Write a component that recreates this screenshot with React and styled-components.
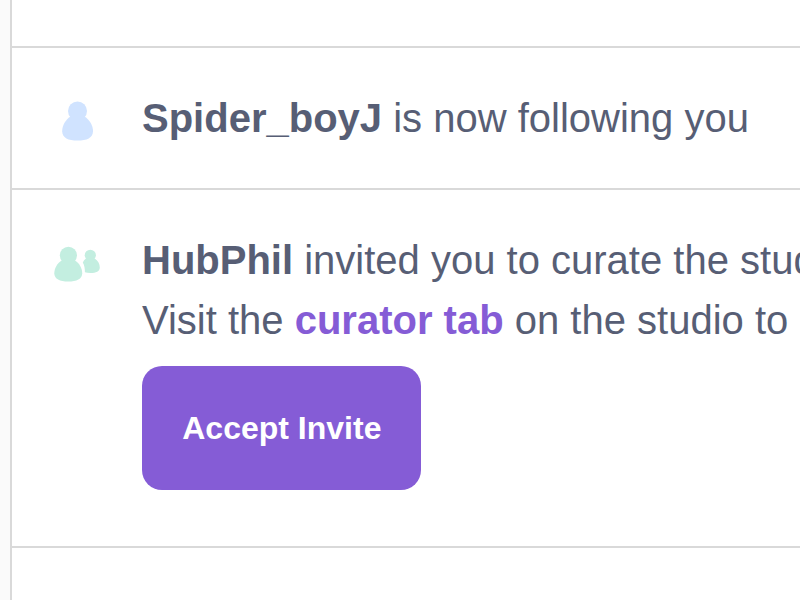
import React from 'react';
import styled, { createGlobalStyle } from 'styled-components';

const GlobalStyle = createGlobalStyle`
  * { box-sizing: border-box; }
  body {
    margin: 0;
    overflow: hidden;
    background: #fafafa;
    font-family: "Liberation Sans", Arial, sans-serif;
  }
`;

const Page = styled.div`
  width: 800px;
  height: 600px;
  padding-left: 10px;
  overflow: hidden;
`;

const List = styled.ul`
  width: 1400px;
  height: 600px;
  margin: 0;
  padding: 0;
  list-style: none;
  background: #fff;
  border-left: 2px solid #d9d9d9;
`;

const Item = styled.li`
  display: flex;
  align-items: flex-start;
  height: ${({ $height }) => $height}px;
  padding: 40px 42px 0;
  border-bottom: 2px solid #d9d9d9;
`;

const IconSlot = styled.div`
  flex: none;
  width: 88px;
  height: 60px;
  svg { display: block; }
`;

const Message = styled.div`
  color: #575e75;
  font-size: 40px;
  line-height: 60px;
  white-space: nowrap;
`;

const Link = styled.a`
  color: ${({ $accent }) => ($accent ? '#855cd6' : '#575e75')};
  font-weight: 700;
`;

const AcceptButton = styled.button`
  display: block;
  height: 124px;
  margin: 16px 0 0;
  padding: 0 39.75px 0 40.25px;
  border: 0;
  border-radius: 20px;
  background: #855cd6;
  color: #fff;
  font: 700 32px/40px "Liberation Sans", Arial, sans-serif;
`;

const FollowIcon = () => (
  <svg width="50" height="60" viewBox="54 88 50 60" fill="#d0e3ff">
    <circle cx="77.500" cy="111" r="9.500" />
    <path d="M70.500 116.500h14c5.300 3.300 8.500 9.200 8.500 14.700 0 6.600-6.200 9.400-15.500 9.400s-15.300-2.800-15.300-9.400c0-5.500 3.100-11.400 8.300-14.700z" />
  </svg>
);

const InviteIcon = () => (
  <svg width="50" height="60" viewBox="54 230 50 60" fill="#c3eee0">
    <circle cx="68.400" cy="255.300" r="8.600" />
    <path d="M62 260.300h12.700c4.700 2.900 7.500 8.100 7.500 13 0 5.900-5.600 8.300-14 8.300s-13.900-2.400-13.900-8.300c0-4.900 3-10.100 7.700-13z" />
    <circle cx="90.300" cy="255.300" r="5.600" />
    <path d="M85.900 258.600h8.800c3.100 1.900 5.100 5.300 5.100 8.900 0 3.800-3.700 5.500-9.400 5.500-2.100 0-4-.2-5.500-.7.100-3.700-.4-6.800-2.100-9.900.7-1.500 1.700-2.800 3.100-3.800z" />
  </svg>
);

export default function App() {
  return (
    <>
      <GlobalStyle />
      <Page>
        <List>
          <Item $height={48} />
          <Item $height={142}>
            <IconSlot><FollowIcon /></IconSlot>
            <Message><Link>Spider_boyJ</Link> is now following you</Message>
          </Item>
          <Item $height={358}>
            <IconSlot><InviteIcon /></IconSlot>
            <Message>
              <div><Link>HubPhil</Link> invited you to curate the studio</div>
              <div>Visit the <Link $accent>curator tab</Link> on the studio to</div>
              <AcceptButton>Accept Invite</AcceptButton>
            </Message>
          </Item>
        </List>
      </Page>
    </>
  );
}
